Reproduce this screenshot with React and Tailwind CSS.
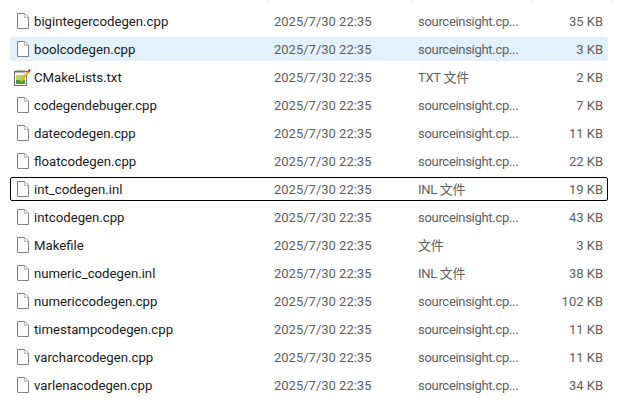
const F = "sourceinsight.cp...";
const rows = [
  ["bigintegercodegen.cpp", F, "35 KB"],
  ["boolcodegen.cpp", F, "3 KB", "sel"],
  ["CMakeLists.txt", "TXT 文件", "2 KB", "txt"],
  ["codegendebuger.cpp", F, "7 KB"],
  ["datecodegen.cpp", F, "11 KB"],
  ["floatcodegen.cpp", F, "22 KB"],
  ["int_codegen.inl", "INL 文件", "19 KB", "focus"],
  ["intcodegen.cpp", F, "43 KB"],
  ["Makefile", "文件", "3 KB"],
  ["numeric_codegen.inl", "INL 文件", "38 KB"],
  ["numericcodegen.cpp", F, "102 KB"],
  ["timestampcodegen.cpp", F, "11 KB"],
  ["varcharcodegen.cpp", F, "11 KB"],
  ["varlenacodegen.cpp", F, "34 KB"],
];

function FileIcon() {
  return (
    <svg width="12" height="16" viewBox="0 0 12 16" className="shrink-0">
      <path d="M0.5 0.5H8L11.5 4V15.5H0.5Z" fill="#fdfdfd" stroke="#808080" />
      <path d="M7.5 0.5V4.5H11.5" fill="#f0f0f0" stroke="#b5b5b5" />
    </svg>
  );
}

function TxtIcon() {
  return (
    <svg width="17" height="17" viewBox="0 0 17 17" className="shrink-0">
      <rect x="0.5" y="2.5" width="12" height="14" fill="#f4f4f0" stroke="#6f6f6f" />
      <path d="M2 1v3M4 1v3M6 1v3M8 1v3M10 1v3" stroke="#777" />
      <rect x="2" y="6" width="9" height="9" fill="#b9d65a" />
      <rect x="2" y="11" width="9" height="4" fill="#4f9a3b" />
      <path d="M7 12L14.5 2.5" stroke="#e8b22a" strokeWidth="2.2" />
      <path d="M14 3.2L16 0.6" stroke="#b8322a" strokeWidth="2.2" />
    </svg>
  );
}

function Row({ name, type, size, state }) {
  const cls =
    state === "sel"
      ? "bg-[#e2f1fc] border-transparent rounded-[3px]"
      : state === "focus"
        ? "border-black rounded-[2px]"
        : "border-transparent";
  return (
    <div className="h-[28px] flex items-center">
      <div className={`w-[598px] h-[24px] flex items-center border ${cls}`}>
        <div className="w-[19px] flex justify-center shrink-0 ml-[2px]">
          {state === "txt" ? <TxtIcon /> : <FileIcon />}
        </div>
        <div className="w-[242px] pl-[2px] pt-[2px] text-[13.2px] text-[#1a1a1a] shrink-0">{name}</div>
        <div className="w-[144px] pt-[2px] text-[13px] text-[#5e5e5e] shrink-0">2025/7/30 22:35</div>
        <div className="w-[140px] pt-[2px] text-[13px] tracking-[-0.3px] text-[#5e5e5e] shrink-0">{type}</div>
        <div className="w-[45px] pt-[2px] text-right text-[13px] text-[#5e5e5e] shrink-0 whitespace-nowrap">{size}</div>
      </div>
    </div>
  );
}

export default function App() {
  return (
    <div className="w-[624px] h-[409px] bg-white overflow-hidden font-['Roboto','Noto_Sans_CJK_SC',sans-serif]">
      <div className="h-[3px] flex">
        <div className="w-px bg-[#e5e5e5] ml-[267px]" />
        <div className="w-px bg-[#e5e5e5] ml-[143px]" />
        <div className="w-px bg-[#e5e5e5] ml-[119px]" />
        <div className="w-px bg-[#e5e5e5] ml-[79px]" />
      </div>
      <div className="pl-[10px] pt-[4px]">
        {rows.map((r) => (
          <Row key={r[0]} name={r[0]} type={r[1]} size={r[2]} state={r[3]} />
        ))}
      </div>
    </div>
  );
}
